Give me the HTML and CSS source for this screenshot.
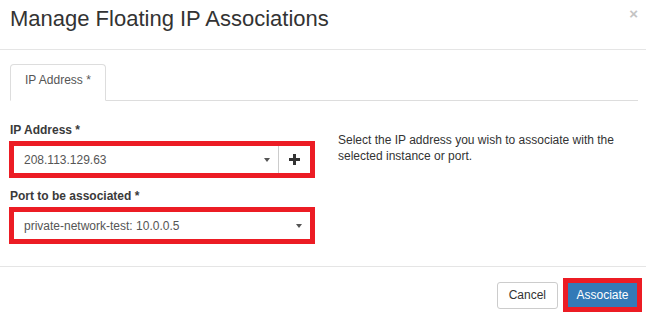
FILE: index.html
```html
<!DOCTYPE html>
<html lang="en">

<head>
    <meta charset="UTF-8">
    <title>Manage Floating IP Associations</title>
    <link rel="stylesheet" href="styles.css">
</head>

<body>
    <div class="modal">
        <!-- header -->
        <div class="modal-header">
            <h3 class="modal-title">Manage Floating IP Associations</h3>
            <span class="close">&times;</span>
        </div>

        <div class="modal-body">
            <ul class="nav-tabs">
                <li class="active">IP Address *</li>
            </ul>

            <div class="tab-content">
                <div class="form-col">
                    <label class="field-label">IP Address *</label>
                    <div class="mark">
                        <div class="input-group">
                            <div class="select">
                                <span>208.113.129.63</span>
                                <span class="caret"></span>
                            </div>
                            <div class="btn-add">
                                <svg width="11" height="11" viewBox="0 0 11 11">
                                    <rect x="4" y="0" width="3" height="11" fill="#333" />
                                    <rect x="0" y="4" width="11" height="3" fill="#333" />
                                </svg>
                            </div>
                        </div>
                    </div>

                    <label class="field-label second">Port to be associated *</label>
                    <div class="mark">
                        <div class="select">
                            <span>private-network-test: 10.0.0.5</span>
                            <span class="caret"></span>
                        </div>
                    </div>
                </div>

                <div class="help-col">
                    <p>Select the IP address you wish to associate with the selected instance or port.</p>
                </div>
            </div>
        </div>

        <!-- footer -->
        <div class="modal-footer">
            <button class="btn btn-cancel">Cancel</button>
            <div class="mark mark-btn">
                <button class="btn btn-primary">Associate</button>
            </div>
        </div>
    </div>
</body>

</html>
```

FILE: styles.css
```css
body {
    margin: 0;
    font-family: "Liberation Sans", Arial, sans-serif;
    font-size: 12px;
    color: #333;
    background: #fff;
}

.modal {
    width: 646px;
}

/* header */
.modal-header {
    height: 50px;
    box-sizing: border-box;
    padding: 8px 8px 0 10px;
    border-bottom: 1px solid #e5e5e5;
    display: flex;
    justify-content: space-between;
    align-items: flex-start;
}

.modal-title {
    margin: 0;
    font-size: 22px;
    font-weight: normal;
    line-height: 22px;
    color: #333;
}

.close {
    margin-top: 1px;
    font-size: 15px;
    font-weight: bold;
    line-height: 10px;
    color: #c4c4c4;
}

/* body */
.modal-body {
    padding: 14px 8px 22px 10px;
}

.nav-tabs {
    list-style: none;
    margin: 0;
    padding: 0;
    display: flex;
    border-bottom: 1px solid #ddd;
}

.nav-tabs li {
    padding: 7px 14px 11px;
    line-height: 17px;
    color: #555;
    border: 1px solid #ddd;
    border-bottom-color: transparent;
    border-radius: 4px 4px 0 0;
    background: #fff;
    margin-bottom: -1px;
}

.tab-content {
    display: flex;
    padding-top: 21px;
}

.form-col {
    width: 305px;
    display: flex;
    flex-direction: column;
}

.field-label {
    font-weight: bold;
    line-height: 17px;
    margin-bottom: 2px;
    color: #3a3a3a;
}

.field-label.second {
    margin-top: 10px;
}

/* red highlight boxes */
.mark {
    border: 5px solid #ec1c24;
}

.form-col .mark {
    margin-left: -1px;
    height: 27px;
}

.input-group {
    display: flex;
    height: 27px;
}

.select {
    flex: 1;
    display: flex;
    justify-content: space-between;
    align-items: center;
    height: 27px;
    padding: 0 8px 0 10px;
    color: #555;
}

.caret {
    width: 0;
    height: 0;
    border-left: 3px solid transparent;
    border-right: 3px solid transparent;
    border-top: 4px solid #555;
}

.btn-add {
    width: 31px;
    border-left: 1px solid #ccc;
    display: flex;
    align-items: center;
    justify-content: center;
}

.help-col {
    margin-left: 23px;
    width: 300px;
}

.help-col p {
    margin: 10px 0 0;
    line-height: 16px;
}

/* footer */
.modal-footer {
    border-top: 1px solid #e5e5e5;
    padding: 11px 4px 6px 0;
    display: flex;
    justify-content: flex-end;
    align-items: center;
}

.btn {
    font-family: "Liberation Sans", Arial, sans-serif;
    font-size: 12px;
    margin: 0;
    cursor: pointer;
}

.btn-cancel {
    height: 27px;
    padding: 0 11px;
    background: #fff;
    color: #333;
    border: 1px solid #ccc;
    border-radius: 3px;
    margin-right: 5px;
}

.mark-btn {
    display: flex;
}

.btn-primary {
    width: 69px;
    height: 24px;
    padding: 0;
    border: none;
    background: #337ab7;
    color: #fff;
}
```
